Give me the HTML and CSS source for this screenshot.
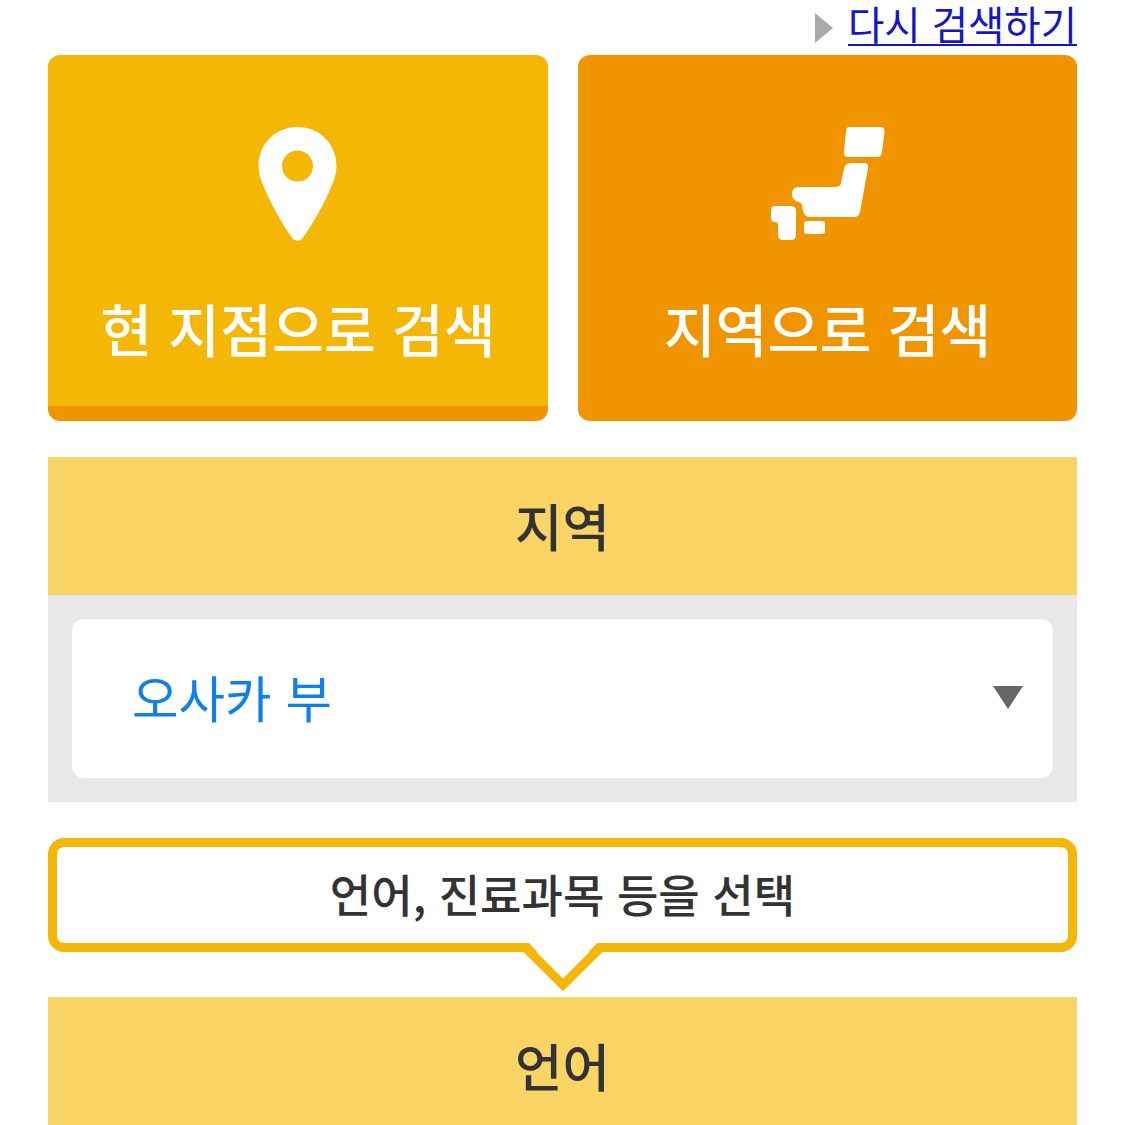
FILE: index.html
```html
<!DOCTYPE html>
<html lang="ko">

<head>
    <meta charset="UTF-8">
    <meta name="viewport" content="width=device-width, initial-scale=1.0">
    <title>검색</title>
    <link rel="stylesheet" href="styles.css">
</head>

<body>
    <div class="retry-row">
        <span class="retry-arrow"></span>
        <a href="#" class="retry-link">다시 검색하기</a>
    </div>

    <!-- search type buttons -->
    <div class="search-buttons">
        <a href="#" class="search-btn btn-here">
            <svg class="btn-icon" width="80" height="116" viewBox="0.5 1 80 116">
                <path fill="#fff" fill-rule="evenodd" d="M40 1C18 1 1 18 1 40c0 7 2 13 5 20 7 17 17 35 28 51 3 5 9 5 12 0 11-16 21-34 28-51 3-7 5-13 5-20C79 18 62 1 40 1zM40 24.500a15.500 15.500 0 1 1 0 31 15.500 15.500 0 0 1 0-31z" />
            </svg>
            <span>현 지점으로 검색</span>
        </a>
        <a href="#" class="search-btn btn-area">
            <svg class="btn-icon" width="114" height="116" viewBox="0 0 114 116">
                <g fill="#fff">
                    <path d="M78 0H109Q114 0 113.500 5L111 25Q110.500 30 106 30H77Q72.500 30 73 25L75 4Q75.500 0 78 0Z" />
                    <path d="M80 36H93Q98 36 97 41L89 85Q88 90 83 90H40Q33 90 32 84L31 78Q30 75 27 75Q21 73 21 67Q21 60 28 60H64Q69 60 70 56L73 42Q74 36 80 36Z" />
                    <path d="M4 79H20Q25 79 25 84V108Q25 113 20 113H12Q7 113 7 108V98Q7 95 4 95Q0 95 0 91V83Q0 79 4 79Z" />
                    <path d="M36 94H51Q54 94 54 97V104Q54 107 51 107H36Q33 107 33 104V97Q33 94 36 94Z" />
                </g>
            </svg>
            <span>지역으로 검색</span>
        </a>
    </div>

    <!-- area -->
    <section class="panel">
        <h2 class="panel-title">지역</h2>
        <div class="panel-body">
            <div class="select-box">
                <span class="select-value">오사카 부</span>
                <span class="select-arrow"></span>
            </div>
        </div>
    </section>

    <div class="callout">
        언어, 진료과목 등을 선택
        <svg class="callout-tail" width="100" height="55" viewBox="513 940 100 55">
            <polygon fill="#fff" points="526,940 563,979 600,940" />
            <polyline fill="none" stroke="#f5b705" stroke-width="9" points="525.500,947.500 563,985 600.500,947.500" />
        </svg>
    </div>

    <!-- language -->
    <section class="panel panel-last">
        <h2 class="panel-title">언어</h2>
    </section>
</body>

</html>
```

FILE: styles.css
```css
html,
body {
    height: 1125px;
    overflow: hidden;
}

body {
    font-family: "Noto Sans CJK KR", "Noto Sans", sans-serif;
    margin: 0;
    padding: 0 48px;
    background-color: #fff;
    color: #333;
}

.retry-row {
    height: 55px;
    display: flex;
    justify-content: flex-end;
    align-items: flex-start;
}

.retry-arrow {
    width: 0;
    height: 0;
    margin: 13px 15px 0 0;
    border-left: 18px solid #aaa;
    border-top: 15px solid transparent;
    border-bottom: 15px solid transparent;
}

.retry-link {
    font-size: 39.500px;
    line-height: 46px;
    height: 44px;
    color: #1515c8;
    text-decoration: none;
    border-bottom: 2px solid #1515c8;
    white-space: nowrap;
}

.search-buttons {
    display: grid;
    grid-template-columns: 500px 499px;
    gap: 30px;
}

.search-btn {
    height: 366px;
    box-sizing: border-box;
    border-radius: 12px;
    padding-top: 72px;
    display: flex;
    flex-direction: column;
    align-items: center;
    color: #fff;
    font-size: 56.500px;
    line-height: 80px;
    font-weight: 500;
    text-decoration: none;
    white-space: nowrap;
}

.btn-here {
    background-color: #f5b705;
    border-bottom: 15px solid #f09400;
}

.btn-area {
    background-color: #f09400;
}

.btn-icon {
    display: block;
    margin-bottom: 44px;
}

.panel {
    margin-top: 36px;
}

.panel-title {
    margin: 0;
    height: 138px;
    background-color: #fad565;
    font-size: 51.500px;
    font-weight: 500;
    line-height: 136px;
    text-align: center;
}

.panel-body {
    background-color: #e8e8e8;
    padding: 24px;
}

.select-box {
    height: 159px;
    background-color: #fff;
    border-radius: 12px;
    padding: 0 30px 0 60px;
    display: flex;
    align-items: center;
    justify-content: space-between;
}

.select-value {
    font-size: 50.500px;
    color: #1080e8;
    margin-bottom: 6px;
}

.select-arrow {
    width: 0;
    height: 0;
    margin-bottom: 3px;
    border-top: 23px solid #666;
    border-left: 15px solid transparent;
    border-right: 15px solid transparent;
}

.callout {
    position: relative;
    margin-top: 36px;
    height: 114px;
    box-sizing: border-box;
    border: 9px solid #f5b705;
    border-radius: 16px;
    background-color: #fff;
    font-size: 45px;
    font-weight: 500;
    line-height: 93px;
    text-align: center;
}

.callout-tail {
    position: absolute;
    left: 50%;
    top: 93px;
    margin-left: -50px;
}

.panel-last {
    margin-top: 45px;
}
```
